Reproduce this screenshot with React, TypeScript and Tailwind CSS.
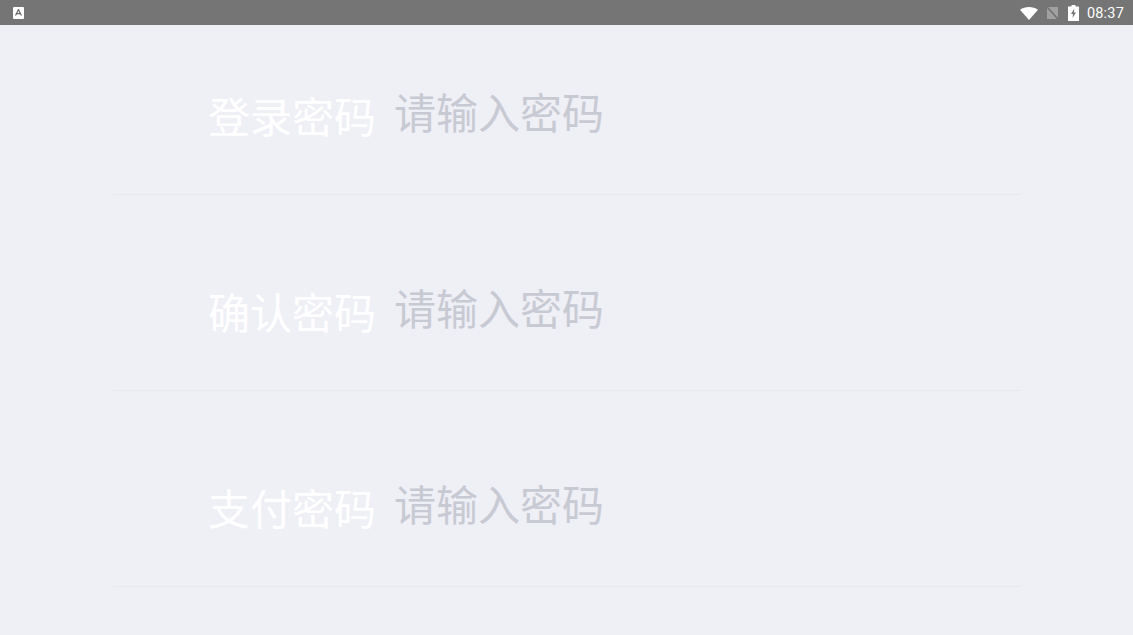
const cjk = "font-['Noto_Sans_CJK_SC',sans-serif]";

function PasswordRow({ label }: { label: string }) {
  return (
    <div className="h-[196px] border-b border-[#e8e8ef] pl-[95px] pt-[84px] flex items-start">
      <span className={`${cjk} text-[42px] leading-[60px] mt-[2px] font-normal text-white w-[186px] shrink-0`}>{label}</span>
      <span className={`${cjk} text-[42px] leading-[60px] -mt-[2px] font-normal text-[#c8cad3]`}>请输入密码</span>
    </div>
  );
}

export default function App() {
  return (
    <div className="w-[1133px] h-[635px] overflow-hidden bg-[#efeff6] flex flex-col">
      {/* status bar */}
      <div className="h-[25px] shrink-0 bg-[#757575] flex items-center justify-between pl-[13px] pr-[9px]">
        <div className="w-[11px] h-[12px] bg-white rounded-[1px] flex items-center justify-center">
          <svg width="7" height="7" viewBox="0 0 7 7">
            <path d="M0.5 6.5 L3.5 0.5 L6.5 6.5 M1.7 4.6 H5.3" fill="none" stroke="#666" strokeWidth="1.2" />
          </svg>
        </div>
        <div className="flex items-center">
          <svg width="18" height="13" viewBox="0 0 18 13" className="mr-[9px] mt-[1px]">
            <path d="M0 2.8 C5 -0.9 13 -0.9 18 2.8 L9 13 Z" fill="#fff" />
          </svg>
          <svg width="11" height="12" viewBox="0 0 11 12" className="mr-[10px] mt-[1px]">
            <path d="M0 0 H11 V12 H0 Z" fill="#a0a0a0" />
            <path d="M0 0 L11 12" stroke="#6e6e6e" strokeWidth="1.5" />
          </svg>
          <svg width="11" height="16" viewBox="0 0 11 16" className="mr-[8px]">
            <path d="M3.5 0 H7.5 V1.5 H11 V16 H0 V1.5 H3.5 Z" fill="#fff" />
            <path d="M6.3 3.5 L3 9 H5 L4.5 13 L8 7.5 H6 Z" fill="#757575" />
          </svg>
          <span className="font-['Roboto',sans-serif] text-[14.5px] leading-[25px] mt-[1px] font-normal text-white tracking-[0.2px]">08:37</span>
        </div>
      </div>

      {/* form */}
      <div className="-mt-[26px] ml-[113px] mr-[112px]">
        <PasswordRow label="登录密码" />
        <PasswordRow label="确认密码" />
        <PasswordRow label="支付密码" />
      </div>
    </div>
  );
}
